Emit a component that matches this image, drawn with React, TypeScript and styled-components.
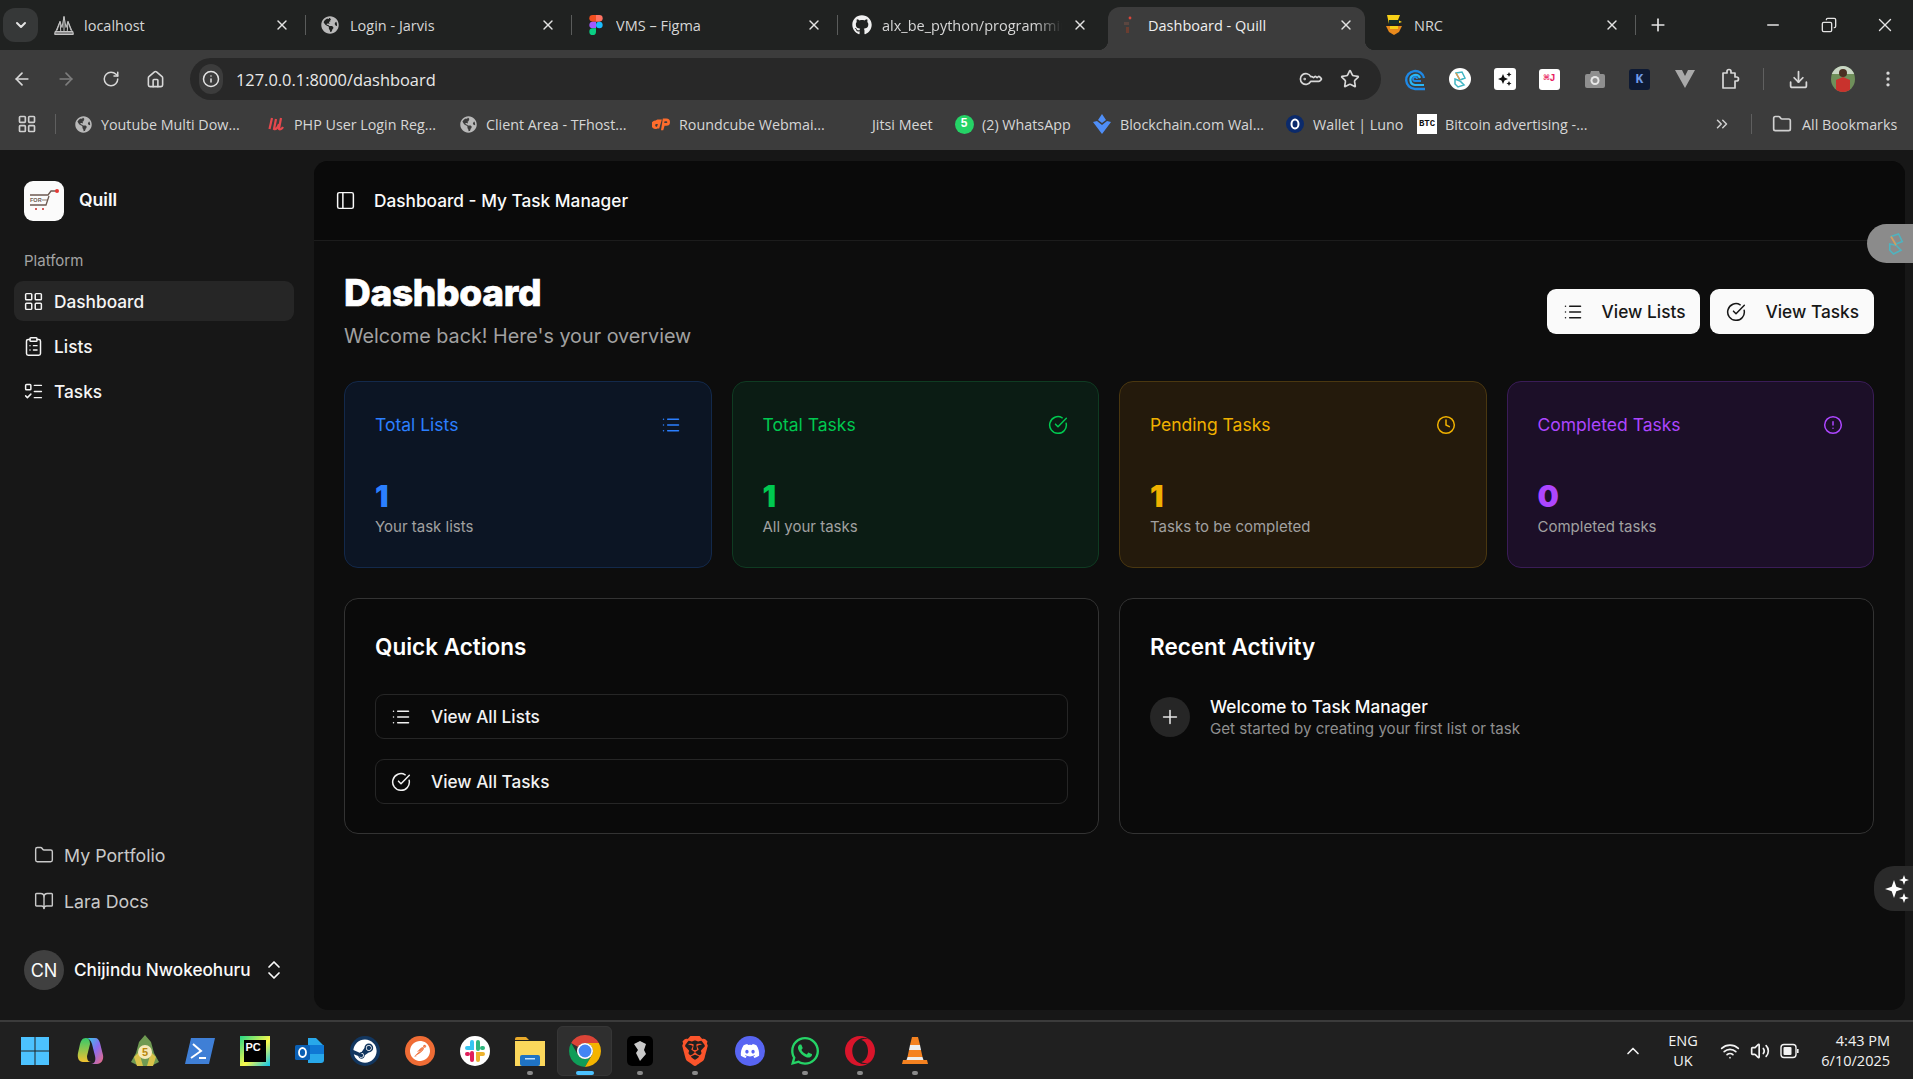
import React from 'react'
import styled, { createGlobalStyle } from 'styled-components'
import {
  ArrowLeft, ArrowRight, BookOpen, ChevronDown, ChevronUp, ChevronsUpDown, CircleAlert, CircleCheckBig, ClipboardList,
  Clock, Copy, Download, Folder, Info, KeyRound, LayoutGrid, List, ListTodo, Minus, MoreVertical,
  PanelLeft, Plus, RotateCw, Star, Volume2, Wifi, X, Home, ChevronsRight,
} from 'lucide-react'
import { FaDiscord, FaGithub, FaGlobeAmericas, FaSteam, FaWhatsapp } from 'react-icons/fa'
import { SiBrave, SiOpera, SiPostman } from 'react-icons/si'

const GlobalStyle = createGlobalStyle`
  html, body { margin: 0; padding: 0; background: #171717; overflow: hidden; }
  * { box-sizing: border-box; }
  body { font-family: Inter, "Liberation Sans", sans-serif; color: #fafafa; }
`

const Page = styled.div`
  position: relative;
  display: flex;
  flex-direction: column;
  width: 1913px;
  height: 1079px;
  overflow: hidden;
`

/* ---- browser chrome ---- */

const TabStrip = styled.div`
  display: flex;
  height: 50px;
  flex: none;
  background: #202221;
  padding-left: 3px;
  font-family: "Open Sans", "Noto Sans", sans-serif;
  font-size: 14.5px;
  color: #d6d6d6;
`

const TabListButton = styled.div`
  width: 35px;
  height: 34px;
  margin: 8px 6px 0 0;
  border-radius: 12px;
  background: #363838;
  display: flex;
  align-items: center;
  justify-content: center;
  color: #e3e3e3;
`

const Tab = styled.div<{ $active?: boolean }>`
  position: relative;
  display: flex;
  align-items: center;
  width: 257px;
  height: 43px;
  margin-top: 7px;
  padding: 0 11px 7px 10px;
  gap: 10px;
  border-radius: 12px 12px 0 0;
  background: ${(p) => (p.$active ? '#3c3c3c' : 'transparent')};
  color: ${(p) => (p.$active ? '#efefef' : '#d6d6d6')};
  ${(p) =>
    p.$active &&
    `
    &::before, &::after {
      content: '';
      position: absolute;
      bottom: 0;
      width: 10px;
      height: 10px;
    }
    &::before { left: -10px; background: radial-gradient(circle at 0 0, transparent 10px, #3c3c3c 10.5px); }
    &::after { right: -10px; background: radial-gradient(circle at 100% 0, transparent 10px, #3c3c3c 10.5px); }
  `}
`

const TabIcon = styled.span`
  width: 20px;
  height: 20px;
  flex: none;
  display: flex;
  align-items: center;
  justify-content: center;
  color: #b9b9b9;
`

const TabTitle = styled.span<{ $fade?: boolean }>`
  flex: 1;
  min-width: 0;
  white-space: nowrap;
  overflow: hidden;
  ${(p) => p.$fade && 'mask-image: linear-gradient(to right, #000 85%, transparent 100%);'}
`

const TabClose = styled(X)`
  flex: none;
  width: 16px;
  height: 16px;
  color: #e3e3e3;
`

const TabSep = styled.div<{ $hidden?: boolean }>`
  width: 9px;
  flex: none;
  display: flex;
  justify-content: center;
  align-items: flex-start;
  padding-top: 15px;
  &::after {
    content: '';
    width: 1px;
    height: 20px;
    background: ${(p) => (p.$hidden ? 'transparent' : '#5a5c5b')};
  }
`

const NewTab = styled.div`
  width: 36px;
  padding-bottom: 1px;
  display: flex;
  align-items: center;
  justify-content: center;
  color: #e3e3e3;
`

const WindowControls = styled.div`
  margin-left: auto;
  display: flex;
`

const WindowButton = styled.div`
  width: 56px;
  display: flex;
  align-items: center;
  justify-content: center;
  color: #e3e3e3;
`

const Toolbar = styled.div`
  display: flex;
  align-items: flex-start;
  height: 58px;
  flex: none;
  background: #3c3c3c;
  padding: 8px 0 0 0;
  color: #d8d8d8;
`

const NavIcon = styled.div<{ $w?: number; $dim?: boolean }>`
  width: ${(p) => p.$w ?? 45}px;
  height: 42px;
  flex: none;
  display: flex;
  align-items: center;
  justify-content: center;
  color: ${(p) => (p.$dim ? '#7d7d7d' : '#d8d8d8')};
`

const Omnibox = styled.div`
  display: flex;
  align-items: center;
  width: 1191px;
  height: 42px;
  margin-left: 12px;
  margin-right: 11px;
  padding: 0 21px 0 9px;
  background: #282828;
  border-radius: 21px;
`

const InfoChip = styled.div`
  width: 24px;
  height: 30px;
  border-radius: 12px;
  background: #3c3c3c;
  display: flex;
  align-items: center;
  justify-content: center;
  margin-right: 13px;
  color: #e3e3e3;
`

const Url = styled.span`
  flex: 1;
  font-family: "Open Sans", "Noto Sans", sans-serif;
  font-size: 16.4px;
  color: #e8e8e8;
`

const OmniActions = styled.div`
  display: flex;
  gap: 20px;
  color: #d8d8d8;
  align-items: center;
`

const ToolSep = styled.div`
  width: 1px;
  height: 22px;
  background: #606060;
  margin: 10px 11px 0 11px;
  flex: none;
`

const BookmarkBar = styled.div`
  display: flex;
  align-items: center;
  height: 42px;
  flex: none;
  padding: 0 0 10px 17px;
  background: #3c3c3c;
  font-family: "Open Sans", "Noto Sans", sans-serif;
  font-size: 14.3px;
  color: #d6d6d6;
  white-space: nowrap;
  & > svg { flex: none; }
`

const BarSep = styled.div<{ $mx: number }>`
  width: 1px;
  height: 20px;
  margin: 0 ${(p) => p.$mx}px;
  background: #5f5f5f;
  flex: none;
`

const Bookmark = styled.div<{ $w: number }>`
  display: flex;
  align-items: center;
  gap: 9px;
  width: ${(p) => p.$w}px;
  flex: none;
`

const MarkIcon = styled.span`
  width: 18px;
  height: 18px;
  flex: none;
  display: flex;
  align-items: center;
  justify-content: center;
  color: #b9b9b9;
`

/* ---- app ---- */

const Body = styled.div`
  display: flex;
  flex: 1;
  min-height: 0;
  background: #171717;
`

const Sidebar = styled.aside`
  width: 314px;
  flex: none;
  display: flex;
  flex-direction: column;
  padding: 31px 20px 30px 14px;
`

const Brand = styled.div`
  display: flex;
  align-items: center;
  gap: 15px;
  padding-left: 10px;
  height: 40px;
`

const BrandName = styled.span`
  font-size: 17.6px;
  font-weight: 600;
  padding-bottom: 3px;
`

const LogoBox = styled.div`
  width: 40px;
  height: 40px;
  border-radius: 9px;
  background: #fbfbfb;
  display: flex;
  align-items: center;
  justify-content: center;
`

const GroupLabel = styled.div`
  margin-top: 30px;
  padding-left: 10px;
  height: 20px;
  line-height: 20px;
  font-size: 15px;
  color: #a3a3a3;
`

const NavList = styled.nav`
  margin-top: 10px;
  display: flex;
  flex-direction: column;
  gap: 5px;
`

const NavItem = styled.div<{ $active?: boolean }>`
  display: flex;
  align-items: center;
  gap: 10px;
  height: 40px;
  padding-left: 9px;
  border-radius: 9px;
  font-size: 17.3px;
  font-weight: 500;
  color: #f5f5f5;
  background: ${(p) => (p.$active ? '#262626' : 'transparent')};
`

const SidebarFooter = styled.div`
  margin-top: auto;
  display: flex;
  flex-direction: column;
  gap: 6px;
`

const FooterLink = styled.div`
  display: flex;
  align-items: center;
  gap: 10px;
  height: 40px;
  padding-left: 20px;
  font-size: 17.8px;
  color: #c9c9c9;
`

const UserRow = styled.div`
  margin-top: 29px;
  display: flex;
  align-items: center;
  gap: 10px;
  height: 40px;
  padding: 0 8px 0 10px;
  font-size: 17.2px;
  font-weight: 500;
`

const Avatar = styled.div`
  width: 40px;
  height: 40px;
  border-radius: 50%;
  background: #404040;
  display: flex;
  align-items: center;
  justify-content: center;
  font-size: 18px;
  font-weight: 400;
  flex: none;
`

const UserName = styled.span`
  flex: 1;
  white-space: nowrap;
  padding-bottom: 2px;
`

const Main = styled.main`
  flex: 1;
  margin: 11px 8px 10px 0;
  border-radius: 14px;
  background: #0d0d0d;
  min-width: 0;
`

const MainHeader = styled.header`
  display: flex;
  align-items: center;
  gap: 18px;
  height: 80px;
  padding: 0 0 1px 21px;
  border-bottom: 1px solid #1c1c1c;
  background: #0a0a0a;
  border-radius: 14px 14px 0 0;
  font-size: 17.25px;
  font-weight: 500;
`

const Content = styled.div`
  padding: 32px 31px 0 30px;
`

const HeadRow = styled.div`
  display: flex;
  align-items: center;
  justify-content: space-between;
`

const Title = styled.h1`
  margin: 0;
  font-size: 37px;
  font-weight: 800;
  line-height: 40px;
  letter-spacing: -0.3px;
  -webkit-text-stroke: 0.7px #fff;
  color: #fff;
`

const Subtitle = styled.p`
  margin: 9px 0 0;
  font-size: 19.75px;
  line-height: 28px;
  color: #a1a1a1;
`

const HeadActions = styled.div`
  display: flex;
  gap: 10px;
`

const HeadButton = styled.div`
  display: flex;
  align-items: center;
  gap: 19px;
  height: 45px;
  padding: 0 15px 0 16px;
  border-radius: 9px;
  background: #fafafa;
  color: #171717;
  font-size: 17.3px;
  font-weight: 500;
`

const StatGrid = styled.div`
  display: grid;
  grid-template-columns: repeat(4, 1fr);
  gap: 20px;
  margin-top: 31px;
`

const StatCard = styled.div<{ $bg: string; $line: string }>`
  padding: 31px 30px 29px 30px;
  border-radius: 14px;
  background: ${(p) => p.$bg};
  border: 1px solid ${(p) => p.$line};
`

const StatTop = styled.div<{ $tone: string }>`
  display: flex;
  align-items: center;
  justify-content: space-between;
  height: 24px;
  font-size: 17.5px;
  color: ${(p) => p.$tone};
`

const StatLabel = styled.span`
  padding-bottom: 2px;
`

const StatValue = styled.div<{ $tone: string }>`
  margin-top: 41px;
  font-size: 30px;
  font-weight: 900;
  line-height: 36px;
  color: ${(p) => p.$tone};
`

const StatNote = styled.div`
  margin-top: 2px;
  font-size: 15px;
  line-height: 22px;
  color: #a1a1a1;
`

const PanelGrid = styled.div`
  display: grid;
  grid-template-columns: repeat(2, 1fr);
  gap: 20px;
  margin-top: 30px;
`

const Panel = styled.section`
  height: 236px;
  padding: 33px 30px 30px 30px;
  border: 1px solid #333;
  border-radius: 14px;
  background: #0a0a0a;
`

const PanelTitle = styled.h2`
  margin: 0;
  font-size: 22.5px;
  font-weight: 600;
  line-height: 30px;
  color: #fff;
`

const ActionList = styled.div`
  margin-top: 32px;
  display: flex;
  flex-direction: column;
  gap: 20px;
`

const ActionRow = styled.div`
  display: flex;
  align-items: center;
  gap: 20px;
  height: 45px;
  padding-left: 15px;
  border: 1px solid #262626;
  border-radius: 9px;
  font-size: 17.2px;
  font-weight: 500;
  color: #f2f2f2;
`

const ActivityRow = styled.div`
  margin-top: 33px;
  display: flex;
  align-items: center;
  gap: 20px;
`

const ActivityDot = styled.div`
  width: 40px;
  height: 40px;
  border-radius: 50%;
  background: #262626;
  display: flex;
  align-items: center;
  justify-content: center;
  color: #e5e5e5;
`

const ActivityTitle = styled.div`
  font-size: 17.2px;
  line-height: 24px;
  font-weight: 500;
  color: #fafafa;
`

const ActivityNote = styled.div`
  font-size: 15.15px;
  line-height: 20px;
  color: #8f8f8f;
`

const FloatTab = styled.div<{ $top: number; $h: number; $w: number; $bg: string; $pad: number }>`
  position: absolute;
  right: 0;
  top: ${(p) => p.$top}px;
  width: ${(p) => p.$w}px;
  height: ${(p) => p.$h}px;
  padding-left: ${(p) => p.$pad}px;
  display: flex;
  align-items: center;
  background: ${(p) => p.$bg};
  border-radius: 20px 0 0 20px;
  overflow: hidden;
`

/* ---- taskbar ---- */

const Taskbar = styled.footer`
  position: relative;
  display: flex;
  align-items: center;
  height: 59px;
  flex: none;
  padding-left: 7px;
  border-top: 2px solid #3b3b3b;
  background: #202020;
`

const TaskItem = styled.div<{ $active?: boolean; $mark?: 'dot' | 'bar' }>`
  position: relative;
  width: 55px;
  height: 50px;
  flex: none;
  display: flex;
  align-items: center;
  justify-content: center;
  border-radius: 6px;
  ${(p) => p.$active && 'background: #2f2f2f; outline: 1px solid #363636; outline-offset: -1px;'}
  &::after {
    content: '';
    display: ${(p) => (p.$mark ? 'block' : 'none')};
    position: absolute;
    bottom: 1px;
    left: 50%;
    transform: translateX(-50%);
    height: 4px;
    width: ${(p) => (p.$mark === 'bar' ? 18 : 6)}px;
    border-radius: 2px;
    background: ${(p) => (p.$mark === 'bar' ? '#4cc2ff' : '#8a8a8a')};
  }
`

const Tray = styled.div`
  margin-left: auto;
  display: flex;
  align-items: center;
  font-family: "Open Sans", "Noto Sans", sans-serif;
  font-size: 14.5px;
  color: #f2f2f2;
  padding-right: 23px;
`

const TrayStack = styled.div<{ $align: string; $w: number }>`
  display: flex;
  flex-direction: column;
  width: ${(p) => p.$w}px;
  text-align: ${(p) => p.$align};
  line-height: 20px;
`

const TrayIcons = styled.div`
  display: flex;
  align-items: center;
  gap: 10px;
  margin: 0 18px 0 17px;
`

const BatteryIcon = () => (
  <svg width="20" height="16" viewBox="0 0 20 16" fill="none">
    <rect x="1" y="1.5" width="15" height="13" rx="3" stroke="#f2f2f2" strokeWidth="1.4" />
    <rect x="3.5" y="4" width="8" height="8" rx="1" fill="#f2f2f2" />
    <rect x="17" y="6" width="1.6" height="4" fill="#f2f2f2" />
  </svg>
)

const QuillLogo = () => (
  <svg width="34" height="26" viewBox="0 0 34 26" fill="none">
    <path d="M3 7h18l3-4h5" stroke="#6d5a52" strokeWidth="1.300" />
    <text x="3" y="13.500" fontSize="5.500" fontWeight="700" fontFamily="Liberation Sans" fill="#6d5a52">FOR</text>
    <path d="M15 12h6" stroke="#a8988f" strokeWidth="1.300" />
    <path d="M3 17h16l3-9" stroke="#6d5a52" strokeWidth="1.300" />
    <circle cx="30" cy="3" r="2" fill="#e53935" />
    <circle cx="9" cy="21" r="1" fill="#c62828" />
    <circle cx="16" cy="21" r="1" fill="#c62828" />
  </svg>
)

const FigmaMark = () => (
  <svg width="14" height="20" viewBox="0 0 12 18">
    <path d="M3 0h3v6H3a3 3 0 0 1 0-6z" fill="#f24e1e" />
    <path d="M6 0h3a3 3 0 0 1 0 6H6z" fill="#ff7262" />
    <path d="M3 6h3v6H3a3 3 0 0 1 0-6z" fill="#a259ff" />
    <circle cx="9" cy="9" r="3" fill="#1abcfe" />
    <path d="M3 12h3v3a3 3 0 1 1-3-3z" fill="#0acf83" />
  </svg>
)

const HostMark = () => (
  <svg width="21" height="21" viewBox="0 0 20 20" fill="none" stroke="#c4c4c4" strokeWidth="1">
    <path d="M0.500 19 6 6l2 6 2-11 2 11 2-6 5.500 13" />
    <path d="M3 15l3-9 1 13M17 15l-3-9-1 13M10 1v18" />
    <path d="M1 16h18v3H1z" fill="#8a8a8a" />
  </svg>
)

const QuillTabMark = () => (
  <svg width="10" height="20" viewBox="0 0 10 20">
    <rect x="1" y="7" width="5" height="3" fill="#5a4640" />
    <rect x="3" y="12" width="3" height="6" fill="#6a3d30" />
    <circle cx="7" cy="3" r="1.4" fill="#d9463a" />
  </svg>
)

const NrcMark = () => (
  <svg width="20" height="22" viewBox="0 0 20 22">
    <path d="M3 1h13l-2 5 4 2-6 2H5z" fill="#f7d117" />
    <path d="M5 6h10v4H5z" fill="#16302b" />
    <path d="M2 12h16l-3 6-5 3-5-3z" fill="#e98a1c" />
    <path d="M6 12h8v3H6z" fill="#f7d117" />
  </svg>
)

const CpanelMark = () => (
  <svg width="20" height="14" viewBox="0 0 20 14" fill="#ff6c2c">
    <path d="M6 2h5L8 12H5l1.500-5H5a1.500 1.500 0 0 0 0 3h1l-.8 2.500H4A4 4 0 0 1 4 3z" />
    <path d="M12 1h4a4 4 0 0 1 0 8h-2l-1.500 5H10zm1.500 5H16a1 1 0 0 0 0-2h-2z" />
  </svg>
)

const ULogo = () => (
  <svg width="18" height="16" viewBox="0 0 18 16" fill="none" stroke="#e5484d" strokeWidth="2.200">
    <path d="M5 2 2.500 13 M9 3 7 13c2 1 4-2 5-5M14 2l-2 11c1 1 3 0 4-2" />
  </svg>
)

const Square = styled.span<{ $bg: string; $fg: string; $size?: number; $fs?: number }>`
  width: ${(p) => p.$size ?? 20}px;
  height: ${(p) => p.$size ?? 20}px;
  flex: none;
  display: flex;
  align-items: center;
  justify-content: center;
  background: ${(p) => p.$bg};
  color: ${(p) => p.$fg};
  border-radius: 3px;
  font-size: ${(p) => p.$fs ?? 10}px;
  font-weight: 700;
  line-height: 1;
  font-family: "Liberation Mono", monospace;
`

const Round = styled(Square)`
  border-radius: 50%;
`

const BtcTile = styled(Square)`
  border-radius: 0;
`

const SpiralMark = () => (
  <svg width="24" height="26" viewBox="0 0 24 26" fill="none">
    <path d="M21 12a9 9 0 1 0-9 11h10" stroke="#1e88e5" strokeWidth="2.400" />
    <path d="M17 12a5 5 0 1 0-5 7h9" stroke="#29b6f6" strokeWidth="2.200" />
    <path d="M14 13a2 2 0 1 0-2 2h6" stroke="#1e88e5" strokeWidth="1.800" />
  </svg>
)

const MerlinBadge = () => (
  <svg width="24" height="24" viewBox="0 0 24 24" fill="none">
    <circle cx="12" cy="12" r="11" fill="#fff" />
    <path d="M8 6l6-1 3 6-5 2zM7 12l5 2 4 4-6 2-3-3z" stroke="#41b6c4" strokeWidth="1.500" />
    <path d="M8 6l4 7" stroke="#e39a4d" strokeWidth="1.500" />
  </svg>
)

const StarsBadge = () => (
  <Square $bg="#fff" $fg="#111" $size={22}>
    <svg width="16" height="16" viewBox="0 0 16 16" fill="#111">
      <path d="M6 3l1.500 3.500L11 8 7.500 9.500 6 13 4.500 9.500 1 8l3.500-1.500z" />
      <path d="M12 1l.8 1.700L14.500 3.500l-1.700.8L12 6l-.8-1.700-1.700-.8 1.700-.8zM12 10l.8 1.700 1.700.8-1.700.8L12 15l-.8-1.700-1.700-.8 1.700-.8z" />
    </svg>
  </Square>
)

const CameraBadge = () => (
  <svg width="22" height="20" viewBox="0 0 22 20">
    <path d="M7 2h8l1 3h3a2 2 0 0 1 2 2v10a2 2 0 0 1-2 2H3a2 2 0 0 1-2-2V7a2 2 0 0 1 2-2h3z" fill="#8f8f8f" />
    <circle cx="11" cy="11.500" r="4.500" fill="#e6e6e6" />
    <circle cx="11" cy="11.500" r="2.500" fill="#8f8f8f" />
  </svg>
)

const VeeMark = () => (
  <svg width="20" height="18" viewBox="0 0 20 18" fill="#a9a9a9">
    <path d="M0 0h7l3 6 3-6h7l-10 18z" />
  </svg>
)

const ExtensionsMark = () => (
  <svg width="22" height="22" viewBox="0 0 22 22" fill="none" stroke="#d8d8d8" strokeWidth="1.700" strokeLinejoin="round">
    <path d="M4 5h4V3.500a2 2 0 0 1 4 0V5h4v4h1.500a2 2 0 0 1 0 4H16v7H4z" />
  </svg>
)

const ProfilePic = () => (
  <svg width="26" height="26" viewBox="0 0 26 26">
    <defs>
      <clipPath id="pp"><ellipse cx="13" cy="13" rx="12" ry="13" /></clipPath>
    </defs>
    <g clipPath="url(#pp)">
      <rect width="26" height="26" fill="#6f8f5a" />
      <rect width="26" height="8" fill="#c9d6c4" />
      <circle cx="13" cy="7" r="4" fill="#4a2f22" />
      <path d="M6 26V14l7-3 7 3v12z" fill="#c9322d" />
    </g>
  </svg>
)

const SparkleStars = () => (
  <svg width="32" height="30" viewBox="0 0 32 30" fill="#fff" style={{ flex: 'none' }}>
    <path d="M11 6l2.300 6.700L20 15l-6.700 2.300L11 24l-2.300-6.700L2 15l6.700-2.300z" />
    <path d="M21 1l1.300 3.700L26 6l-3.700 1.300L21 11l-1.300-3.700L16 6l3.700-1.300zM21 19l1.300 3.700L26 24l-3.700 1.300L21 29l-1.300-3.700L16 24l3.700-1.300z" />
  </svg>
)

const WindowsMark = () => (
  <svg width="30" height="30" viewBox="0 0 30 30">
    <path d="M1 1h13.500v13.500H1zM15.500 1H29v13.500H15.500zM1 15.500h13.500V29H1zM15.500 15.500H29V29H15.500z" fill="#4cc2ff" />
  </svg>
)

const CopilotMark = () => (
  <svg width="30" height="30" viewBox="0 0 30 30">
    <defs>
      <linearGradient id="cpa" x1="0" y1="0" x2="1" y2="1">
        <stop offset="0" stopColor="#2dd4e8" />
        <stop offset="0.5" stopColor="#8a6cf0" />
        <stop offset="1" stopColor="#f06a7a" />
      </linearGradient>
      <linearGradient id="cpb" x1="0" y1="1" x2="0" y2="0">
        <stop offset="0" stopColor="#f2c230" />
        <stop offset="1" stopColor="#35c96a" />
      </linearGradient>
    </defs>
    <path d="M11 2h9c3 0 4 2 5 5l3 12c1 5-2 9-6 9h-6c4 0 5-4 4-8L17 8c-1-3-3-6-6-6z" fill="url(#cpa)" />
    <path d="M11 2c-4 0-5 3-6 6L3 17c-1 5 1 9 5 9h8c-3 0-4-3-4-6l3-12c0-3-1-6-4-6z" fill="url(#cpb)" />
  </svg>
)

const MetaTraderMark = () => (
  <svg width="30" height="32" viewBox="0 0 30 32">
    <path d="M15 0l6 7 3 11 5 9-8 4H9l-8-4 5-9 3-11z" fill="#6f9a52" />
    <path d="M4 22l5-5 4 14H7zM26 22l-5-5-4 14h6z" fill="#d9c24a" />
    <circle cx="15" cy="17" r="7" fill="#f5e9b8" />
    <text x="15" y="21" fontSize="11" fontWeight="700" textAnchor="middle" fill="#b8860b" fontFamily="Liberation Sans">5</text>
  </svg>
)

const PowerShellMark = () => (
  <svg width="30" height="28" viewBox="0 0 30 28">
    <path d="M6 1h24l-6 26H0z" fill="#3f7fd6" />
    <path d="M8 7l8 7-10 7M14 21h7" stroke="#fff" strokeWidth="2" fill="none" />
  </svg>
)

const PyCharmTile = styled.span`
  position: relative;
  width: 30px;
  height: 30px;
  display: flex;
  background: linear-gradient(135deg, #21d789 0%, #fcf84a 55%, #07c3f2 100%);
  padding: 4px;
`

const PyCharmFace = styled.span`
  flex: 1;
  background: #000;
  color: #fff;
  font-size: 11px;
  line-height: 1;
  font-weight: 700;
  padding: 2px;
  font-family: "Liberation Sans", sans-serif;
`

const OutlookMark = () => (
  <svg width="30" height="28" viewBox="0 0 30 28">
    <path d="M13 1l8 0 8 8v14a3 3 0 0 1-3 3H13z" fill="#28a8ea" />
    <path d="M13 8h16v9H13z" fill="#0f78d4" />
    <rect x="0" y="8" width="15" height="15" rx="1.500" fill="#0a5fb4" />
    <ellipse cx="7.500" cy="15.500" rx="3.500" ry="4.500" fill="none" stroke="#fff" strokeWidth="1.800" />
  </svg>
)

const SlackMark = () => (
  <svg width="24" height="24" viewBox="0 0 24 24" fill="none" strokeWidth="4" strokeLinecap="round">
    <path d="M9 3v6H4" stroke="#36c5f0" />
    <path d="M15 3v7" stroke="#2eb67d" />
    <path d="M20 9h-1" stroke="#2eb67d" />
    <path d="M9 21v-7" stroke="#e01e5a" />
    <path d="M4 15h1" stroke="#e01e5a" />
    <path d="M15 21v-6h5" stroke="#ecb22e" />
  </svg>
)

const FolderMark = () => (
  <svg width="30" height="30" viewBox="0 0 30 30">
    <path d="M0 3a2 2 0 0 1 2-2h9l3 3H0z" fill="#e8a92a" />
    <path d="M0 5h30v25H0z" fill="#fbd75b" />
    <rect x="5" y="19" width="20" height="11" rx="2" fill="#1f73c4" />
    <rect x="10" y="22" width="10" height="1.500" fill="#bfe0ff" />
  </svg>
)

const ChromeMark = () => (
  <svg width="32" height="32" viewBox="4 4 40 40">
    <path d="M24 4a20 20 0 0 1 17.300 10H24a10 10 0 0 0-8.660 5L6.700 14A20 20 0 0 1 24 4z" fill="#db4437" />
    <path d="M6.700 14A20 20 0 0 0 24 44l8.660-15a10 10 0 0 1-17.320 0z" fill="#0f9d58" />
    <path d="M41.300 14H24a10 10 0 0 1 8.660 15L24 44a20 20 0 0 0 17.300-30z" fill="#f4b400" />
    <circle cx="24" cy="24" r="10" fill="#fff" />
    <circle cx="24" cy="24" r="8" fill="#4285f4" />
  </svg>
)

const BlockMark = () => (
  <svg width="26" height="30" viewBox="0 0 26 30">
    <rect width="26" height="30" rx="5" fill="#000" />
    <path d="M7 8l6-3 6 3-2 6 2 4-6 7-4-8 2-3z" fill="#c9c9c9" />
  </svg>
)

const VlcMark = () => (
  <svg width="26" height="30" viewBox="0 0 26 30">
    <path d="M10 1h6l2 8H8z" fill="#f58220" />
    <path d="M8 9h10l1 5H7z" fill="#eee" />
    <path d="M7 14h12l1.500 7h-15z" fill="#f58220" />
    <path d="M5.500 21h15l1 3h-17z" fill="#eee" />
    <path d="M1 24h24l1 4H0z" fill="#f58220" />
  </svg>
)

const MerlinFaint = () => (
  <svg width="30" height="30" viewBox="0 0 24 24" fill="none" style={{ flex: 'none' }}>
    <path d="M8 6l6-2 3 6-5 2zM7 12l5 1 4 4-6 3-3-3z" stroke="#4fb3bf" strokeWidth="1.300" />
    <path d="M8 6l4 7" stroke="#d99a5b" strokeWidth="1.300" />
  </svg>
)

const tabs = [
  { title: 'localhost', icon: <HostMark /> },
  { title: 'Login - Jarvis', icon: <FaGlobeAmericas size={18} /> },
  { title: 'VMS – Figma', icon: <FigmaMark /> },
  { title: 'alx_be_python/programmin', icon: <FaGithub size={20} color="#f0f0f0" />, fade: true },
  { title: 'Dashboard - Quill', icon: <QuillTabMark />, active: true },
  { title: 'NRC', icon: <NrcMark /> },
]

const bookmarks = [
  { label: 'Youtube Multi Dow...', w: 193, icon: <FaGlobeAmericas size={17} /> },
  { label: 'PHP User Login Reg...', w: 192, icon: <ULogo /> },
  { label: 'Client Area - TFhost...', w: 193, icon: <FaGlobeAmericas size={17} /> },
  { label: 'Roundcube Webmai...', w: 193, icon: <CpanelMark /> },
  { label: 'Jitsi Meet', w: 110, icon: null },
  { label: '(2) WhatsApp', w: 138, icon: <Round $bg="#25d366" $fg="#fff" $size={19} $fs={12}>5</Round> },
  { label: 'Blockchain.com Wal...', w: 193, icon: <svg width="18" height="20" viewBox="0 0 18 20" fill="#4f8ef7"><path d="M9 0l4 6-4 3-4-3zM0 8l4-1 5 4v9zM18 8l-4-1-5 4v9z" /></svg> },
  { label: 'Wallet | Luno', w: 132, icon: <Round $bg="#0b2a6b" $fg="#fff" $size={18}><svg width="10" height="12" viewBox="0 0 10 12" fill="none" stroke="#fff" strokeWidth="2"><ellipse cx="5" cy="6" rx="3.500" ry="4.500" /></svg></Round> },
  { label: 'Bitcoin advertising -...', w: 275, icon: <BtcTile $bg="#fff" $fg="#111" $size={20} $fs={9}>BTC</BtcTile> },
]

const stats = [
  { label: 'Total Lists', value: '1', note: 'Your task lists', tone: '#2b7fff', bg: '#0c1524', line: '#13294b', Icon: List },
  { label: 'Total Tasks', value: '1', note: 'All your tasks', tone: '#00c950', bg: '#0b1c14', line: '#0f3b22', Icon: CircleCheckBig },
  { label: 'Pending Tasks', value: '1', note: 'Tasks to be completed', tone: '#f0b100', bg: '#241a0c', line: '#4a3710', Icon: Clock },
  { label: 'Completed Tasks', value: '0', note: 'Completed tasks', tone: '#ad46ff', bg: '#1c0f28', line: '#3a1c57', Icon: CircleAlert },
]

const taskApps: { icon: React.ReactNode; mark?: 'dot' | 'bar'; active?: boolean }[] = [
  { icon: <WindowsMark /> },
  { icon: <CopilotMark /> },
  { icon: <MetaTraderMark /> },
  { icon: <PowerShellMark /> },
  { icon: <PyCharmTile><PyCharmFace>PC</PyCharmFace></PyCharmTile> },
  { icon: <OutlookMark /> },
  { icon: <Round $bg="#12365f" $fg="#fff" $size={30}><FaSteam size={24} /></Round> },
  { icon: <Round $bg="#ef6c35" $fg="#fff" $size={30}><SiPostman size={20} /></Round> },
  { icon: <Round $bg="#fff" $fg="#000" $size={30}><SlackMark /></Round> },
  { icon: <FolderMark />, mark: 'dot' },
  { icon: <ChromeMark />, mark: 'bar', active: true },
  { icon: <BlockMark />, mark: 'dot' },
  { icon: <SiBrave size={30} color="#fb542b" />, mark: 'dot' },
  { icon: <Round $bg="#5865f2" $fg="#fff" $size={30}><FaDiscord size={20} /></Round> },
  { icon: <FaWhatsapp size={32} color="#25d366" />, mark: 'dot' },
  { icon: <SiOpera size={30} color="#d9152b" />, mark: 'dot' },
  { icon: <VlcMark />, mark: 'dot' },
]

export default function App() {
  return (
    <Page>
      <GlobalStyle />
      <TabStrip>
        <TabListButton><ChevronDown size={16} strokeWidth={3} /></TabListButton>
        {tabs.map((t, i) => (
          <React.Fragment key={t.title}>
            <Tab $active={t.active}>
              <TabIcon>{t.icon}</TabIcon>
              <TabTitle $fade={t.fade}>{t.title}</TabTitle>
              <TabClose strokeWidth={2} />
            </Tab>
            <TabSep $hidden={t.active || tabs[i + 1]?.active} />
          </React.Fragment>
        ))}
        <NewTab><Plus size={20} /></NewTab>
        <WindowControls>
          <WindowButton><Minus size={18} /></WindowButton>
          <WindowButton><Copy size={16} style={{ transform: 'scaleX(-1)' }} /></WindowButton>
          <WindowButton><X size={22} strokeWidth={1.500} /></WindowButton>
        </WindowControls>
      </TabStrip>

      <Toolbar>
        <NavIcon $w={43}><ArrowLeft size={20} /></NavIcon>
        <NavIcon $dim><ArrowRight size={20} /></NavIcon>
        <NavIcon><RotateCw size={18} /></NavIcon>
        <NavIcon><Home size={19} /></NavIcon>
        <Omnibox>
          <InfoChip><Info size={18} /></InfoChip>
          <Url>127.0.0.1:8000/dashboard</Url>
          <OmniActions>
            <KeyRound size={20} style={{ transform: 'rotate(-135deg)' }} />
            <Star size={20} />
          </OmniActions>
        </Omnibox>
        <NavIcon><SpiralMark /></NavIcon>
        <NavIcon><MerlinBadge /></NavIcon>
        <NavIcon><StarsBadge /></NavIcon>
        <NavIcon><Square $bg="#fff" $fg="#e91e63" $size={21} $fs={10}>⌘J</Square></NavIcon>
        <NavIcon><CameraBadge /></NavIcon>
        <NavIcon><Square $bg="#0e1a33" $fg="#6f9be8" $size={21} $fs={13}>K</Square></NavIcon>
        <NavIcon><VeeMark /></NavIcon>
        <NavIcon><ExtensionsMark /></NavIcon>
        <ToolSep />
        <NavIcon $w={46}><Download size={21} /></NavIcon>
        <NavIcon $w={44}><ProfilePic /></NavIcon>
        <NavIcon $w={46}><MoreVertical size={20} /></NavIcon>
      </Toolbar>

      <BookmarkBar>
        <LayoutGrid size={20} color="#d0d0d0" />
        <BarSep $mx={18} />
        {bookmarks.map((b) => (
          <Bookmark key={b.label} $w={b.w}>
            <MarkIcon>{b.icon}</MarkIcon>
            {b.label}
          </Bookmark>
        ))}
        <ChevronsRight size={18} color="#d0d0d0" style={{ marginLeft: 20 }} />
        <BarSep $mx={20} />
        <Folder size={20} color="#d0d0d0" style={{ marginRight: 10 }} />
        All Bookmarks
      </BookmarkBar>

      <Body>
        <Sidebar>
          <Brand>
            <LogoBox><QuillLogo /></LogoBox>
            <BrandName>Quill</BrandName>
          </Brand>
          <GroupLabel>Platform</GroupLabel>
          <NavList>
            <NavItem $active><LayoutGrid size={21} strokeWidth={1.7} />Dashboard</NavItem>
            <NavItem><ClipboardList size={21} strokeWidth={1.7} />Lists</NavItem>
            <NavItem><ListTodo size={21} strokeWidth={1.7} />Tasks</NavItem>
          </NavList>
          <SidebarFooter>
            <FooterLink><Folder size={20} strokeWidth={1.7} />My Portfolio</FooterLink>
            <FooterLink><BookOpen size={20} strokeWidth={1.7} />Lara Docs</FooterLink>
          </SidebarFooter>
          <UserRow>
            <Avatar>CN</Avatar>
            <UserName>Chijindu Nwokeohuru</UserName>
            <ChevronsUpDown size={24} strokeWidth={1.7} />
          </UserRow>
        </Sidebar>

        <Main>
          <MainHeader>
            <PanelLeft size={21} strokeWidth={1.7} />
            Dashboard - My Task Manager
          </MainHeader>
          <Content>
            <HeadRow>
              <div>
                <Title>Dashboard</Title>
                <Subtitle>Welcome back! Here's your overview</Subtitle>
              </div>
              <HeadActions>
                <HeadButton><List size={20} strokeWidth={1.8} />View Lists</HeadButton>
                <HeadButton><CircleCheckBig size={20} strokeWidth={1.8} />View Tasks</HeadButton>
              </HeadActions>
            </HeadRow>

            <StatGrid>
              {stats.map(({ Icon, ...s }) => (
                <StatCard key={s.label} $bg={s.bg} $line={s.line}>
                  <StatTop $tone={s.tone}>
                    <StatLabel>{s.label}</StatLabel>
                    <Icon size={20} strokeWidth={1.8} />
                  </StatTop>
                  <StatValue $tone={s.tone}>{s.value}</StatValue>
                  <StatNote>{s.note}</StatNote>
                </StatCard>
              ))}
            </StatGrid>

            <PanelGrid>
              <Panel>
                <PanelTitle>Quick Actions</PanelTitle>
                <ActionList>
                  <ActionRow><List size={20} strokeWidth={1.8} />View All Lists</ActionRow>
                  <ActionRow><CircleCheckBig size={20} strokeWidth={1.8} />View All Tasks</ActionRow>
                </ActionList>
              </Panel>
              <Panel>
                <PanelTitle>Recent Activity</PanelTitle>
                <ActivityRow>
                  <ActivityDot><Plus size={22} strokeWidth={1.7} /></ActivityDot>
                  <div>
                    <ActivityTitle>Welcome to Task Manager</ActivityTitle>
                    <ActivityNote>Get started by creating your first list or task</ActivityNote>
                  </div>
                </ActivityRow>
              </Panel>
            </PanelGrid>
          </Content>
        </Main>
      </Body>

      <Taskbar>
        {taskApps.map((a, i) => (
          <TaskItem key={i} $active={a.active} $mark={a.mark}>{a.icon}</TaskItem>
        ))}
        <Tray>
          <ChevronUp size={20} style={{ marginRight: 20 }} />
          <TrayStack $align="center" $w={40}>
            <span>ENG</span>
            <span>UK</span>
          </TrayStack>
          <TrayIcons>
            <Wifi size={20} />
            <Volume2 size={20} />
            <BatteryIcon />
          </TrayIcons>
          <TrayStack $align="right" $w={72}>
            <span>4:43 PM</span>
            <span>6/10/2025</span>
          </TrayStack>
        </Tray>
      </Taskbar>

      <FloatTab $top={224} $h={39} $w={46} $bg="#8b8b8b" $pad={14}>
        <MerlinFaint />
      </FloatTab>
      <FloatTab $top={866} $h={45} $w={39} $bg="#2a2a2a" $pad={9}>
        <SparkleStars />
      </FloatTab>
    </Page>
  )
}
